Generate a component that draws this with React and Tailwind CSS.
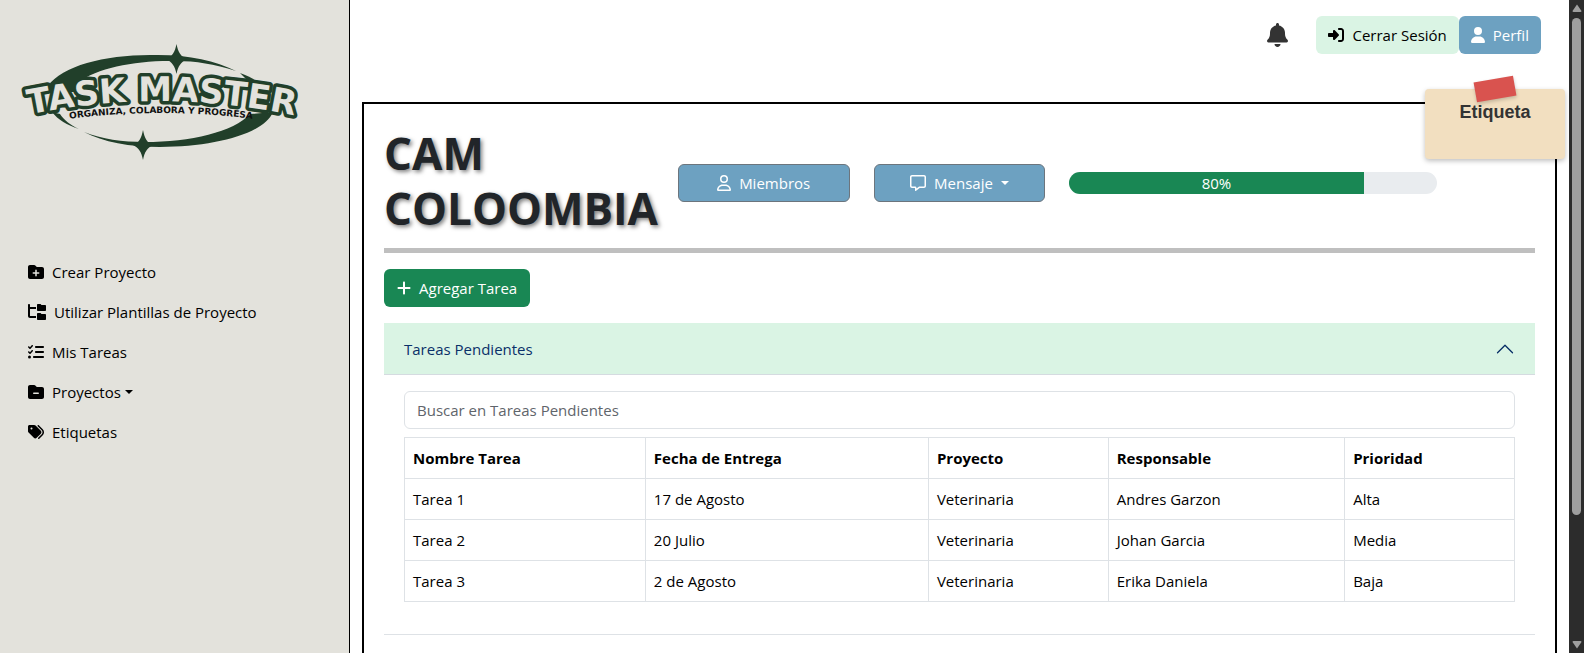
import {
  FaBell,
  FaFolderMinus,
  FaFolderPlus,
  FaFolderTree,
  FaListCheck,
  FaPlus,
  FaRegMessage,
  FaRegUser,
  FaRightToBracket,
  FaTags,
  FaUser,
} from "react-icons/fa6";

const navItems = [
  { label: "Crear Proyecto", Icon: FaFolderPlus, size: "w-4" },
  { label: "Utilizar Plantillas de Proyecto", Icon: FaFolderTree, size: "w-[18px]" },
  { label: "Mis Tareas", Icon: FaListCheck, size: "w-4" },
  { label: "Proyectos", Icon: FaFolderMinus, size: "w-4", menu: true },
  { label: "Etiquetas", Icon: FaTags, size: "w-4" },
];

const columns = [
  { label: "Nombre Tarea", width: "w-[21.7%]" },
  { label: "Fecha de Entrega", width: "w-[25.5%]" },
  { label: "Proyecto", width: "w-[16.2%]" },
  { label: "Responsable", width: "w-[21.3%]" },
  { label: "Prioridad", width: "w-[15.3%]" },
];

const tasks = [
  ["Tarea 1", "17 de Agosto", "Veterinaria", "Andres Garzon", "Alta"],
  ["Tarea 2", "20 Julio", "Veterinaria", "Johan Garcia", "Media"],
  ["Tarea 3", "2 de Agosto", "Veterinaria", "Erika Daniela", "Baja"],
];

function Caret() {
  return <span className="border-x-4 border-t-4 border-x-transparent border-t-current" />;
}

function Logo() {
  return (
    <svg viewBox="20 40 285 125" className="w-[285px]" role="img" aria-label="Task Master">
      <g fill="#213f2a">
        <path d="M48 86 C62 66 104 55 150 55 C186 54 214 60 236 71 C214 64 196 61 176 61 C136 60 98 68 78 82 L74 92 L48 92 Z" />
        <path d="M240 73 C249 76 256 80 262 86 L250 83 Z" />
        <path d="M52 112 L60 114 C64 120 70 125 79 129 C67 125 58 120 52 112 Z" />
        <path d="M84 132 C102 139 122 142 145 142 C190 142 234 132 250 114 L273 112 C264 134 214 147 160 147 C130 147 103 142 84 132 Z" />
        <path d="M176.500 44 C178 52 181 57 187 59 C181 62 178 66 176.500 74 C175 66 172 62 166 59 C172 57 175 52 176.500 44 Z" />
        <path d="M143 130 C144.500 138 147 143 153 145 C147 148 144.500 152 143 160 C141.500 152 139 148 133 145 C139 143 141.500 138 143 130 Z" />
      </g>
      <path id="logo-name" d="M22 116 Q161 86 302 117" fill="none" />
      <path id="logo-motto" d="M60 120 Q161 106 262 120" fill="none" />
      <text
        className="font-['DejaVu_Sans'] text-[34px] font-bold"
        fill="#e3e2dc"
        stroke="#213f2a"
        strokeWidth="7"
        strokeLinejoin="round"
        paintOrder="stroke"
      >
        <textPath href="#logo-name" startOffset="50%" textAnchor="middle">
          TASK MASTER
        </textPath>
      </text>
      <text className="font-['DejaVu_Sans'] text-[9px] font-bold" fill="#111">
        <textPath href="#logo-motto" startOffset="50%" textAnchor="middle">
          ORGANIZA, COLABORA Y PROGRESA
        </textPath>
      </text>
    </svg>
  );
}

function Sidebar() {
  return (
    <aside className="w-[350px] shrink-0 border-r border-black bg-[#e3e2dc]">
      <div className="px-5 pt-10">
        <Logo />
      </div>
      <nav className="mt-[87px] flex flex-col px-7">
        {navItems.map(({ label, Icon, size, menu }) => (
          <a key={label} href="#" className="flex h-10 items-center gap-2 text-black">
            <Icon className={`${size} h-4`} />
            <span className="flex items-center gap-1">
              {label}
              {menu && <Caret />}
            </span>
          </a>
        ))}
      </nav>
    </aside>
  );
}

function TopBar() {
  return (
    <header className="flex items-center justify-end pt-4 pr-4">
      <button type="button" aria-label="Notificaciones" className="mr-7 text-[#333]">
        <FaBell className="h-6 w-[21px]" />
      </button>
      <button type="button" className="flex h-[38px] items-center gap-2 rounded-md bg-[#daf4e4] px-3 text-black">
        <FaRightToBracket className="size-4" />
        Cerrar Sesión
      </button>
      <button type="button" className="flex h-[38px] items-center gap-2 rounded-md bg-[#6da1c1] px-3 text-white">
        <FaUser className="h-4 w-[14px]" />
        Perfil
      </button>
    </header>
  );
}

function StickyLabel() {
  return (
    <div className="absolute -top-[15px] -right-[10px] h-[70px] w-[140px] rounded bg-[#f2dfc0] pt-[10px] text-center shadow-[0_2px_5px_rgba(0,0,0,0.25)]">
      <span className="absolute -top-[10px] left-[50px] h-5 w-10 -rotate-10 bg-[#d9534f] shadow-[0_2px_4px_rgba(0,0,0,0.2)]" />
      <span className="font-['Liberation_Sans',sans-serif] text-[18px] leading-[27px] font-bold text-[#333]">
        Etiqueta
      </span>
    </div>
  );
}

function ProjectHeader() {
  const progress = 80;
  return (
    <div className="grid grid-cols-12 items-center gap-6">
      <h1 className="col-span-3 pb-1 text-[44px] leading-[55px] font-bold text-[#212529] [text-shadow:2px_2px_4px_rgba(0,0,0,0.5)]">
        CAM COLOOMBIA
      </h1>
      <button type="button" className="col-span-2 flex h-[38px] items-center justify-center gap-2 rounded-md border border-[#6c757d] bg-[#6da1c1] text-white">
        <FaRegUser className="h-4 w-[14px]" />
        Miembros
      </button>
      <button type="button" className="col-span-2 flex h-[38px] items-center justify-center gap-2 rounded-md border border-[#6c757d] bg-[#6da1c1] text-white">
        <FaRegMessage className="size-4" />
        Mensaje
        <Caret />
      </button>
      <div
        role="progressbar"
        aria-label="Progreso del proyecto"
        aria-valuenow={progress}
        aria-valuemin={0}
        aria-valuemax={100}
        className="col-span-4 h-[22px] overflow-hidden rounded-full bg-[#e9ecef]"
      >
        <div className="bg-[#198754] text-center leading-[22px] text-white" style={{ width: `${progress}%` }}>
          {progress}%
        </div>
      </div>
    </div>
  );
}

function PendingTasks() {
  return (
    <section className="mt-4 border-b border-[#dee2e6]">
      <h2>
        <button
          type="button"
          aria-expanded="true"
          className="flex h-[52px] w-full items-center justify-between border-b border-[#d5dbe0] bg-[#daf4e4] px-5 text-[#0a3069]"
        >
          Tareas Pendientes
          <svg viewBox="0 0 16 16" className="size-5" fill="none" stroke="#052c65" strokeLinecap="round" strokeLinejoin="round">
            <path d="M2 11 L8 5 L14 11" />
          </svg>
        </button>
      </h2>
      <div className="px-5 py-4">
        <input
          type="search"
          aria-label="Buscar en Tareas Pendientes"
          placeholder="Buscar en Tareas Pendientes"
          className="block h-[38px] w-full rounded-md border border-[#dee2e6] px-3 placeholder:text-[#5f656b]"
        />
        <table className="mt-2 mb-4 w-full table-fixed border-collapse text-left text-black">
          <thead>
            <tr>
              {columns.map(({ label, width }) => (
                <th key={label} scope="col" className={`${width} h-[41px] border border-[#dee2e6] px-2 font-bold`}>
                  {label}
                </th>
              ))}
            </tr>
          </thead>
          <tbody>
            {tasks.map((task) => (
              <tr key={task[0]}>
                {task.map((cell, i) => (
                  <td key={columns[i].label} className="h-[41px] border border-[#dee2e6] px-2">
                    {cell}
                  </td>
                ))}
              </tr>
            ))}
          </tbody>
        </table>
      </div>
    </section>
  );
}

function ScrollRail() {
  return (
    <div aria-hidden="true" className="flex w-[15px] shrink-0 flex-col items-center bg-[#2c2c2c] py-1">
      <svg viewBox="0 0 10 8" className="h-2 w-[10px]" fill="#9f9f9f">
        <path d="M5 0.500 L9.500 7 Q9.500 8 8.500 8 H1.500 Q0.500 8 0.500 7 Z" />
      </svg>
      <div className="mt-[6px] mb-auto h-[77%] w-[9px] rounded-full bg-[#9f9f9f]" />
      <svg viewBox="0 0 10 8" className="h-2 w-[10px]" fill="#9f9f9f">
        <path d="M5 7.500 L9.500 1 Q9.500 0 8.500 0 H1.500 Q0.500 0 0.500 1 Z" />
      </svg>
    </div>
  );
}

export default function App() {
  return (
    <div className="flex h-screen overflow-hidden bg-white font-['Open_Sans',sans-serif] text-[15px] leading-6">
      <Sidebar />
      <main className="min-w-0 flex-1 overflow-hidden px-3">
        <TopBar />
        <div className="relative mt-12 min-h-screen border-2 border-black px-5 pt-[22px]">
          <StickyLabel />
          <ProjectHeader />
          <hr className="mt-2 h-[5px] border-0 bg-[#bfbfbf]" />
          <button type="button" className="mt-4 flex h-[38px] items-center gap-2 rounded-md bg-[#198754] px-[13px] text-white">
            <FaPlus className="h-4 w-[14px]" />
            Agregar Tarea
          </button>
          <PendingTasks />
        </div>
      </main>
      <ScrollRail />
    </div>
  );
}
